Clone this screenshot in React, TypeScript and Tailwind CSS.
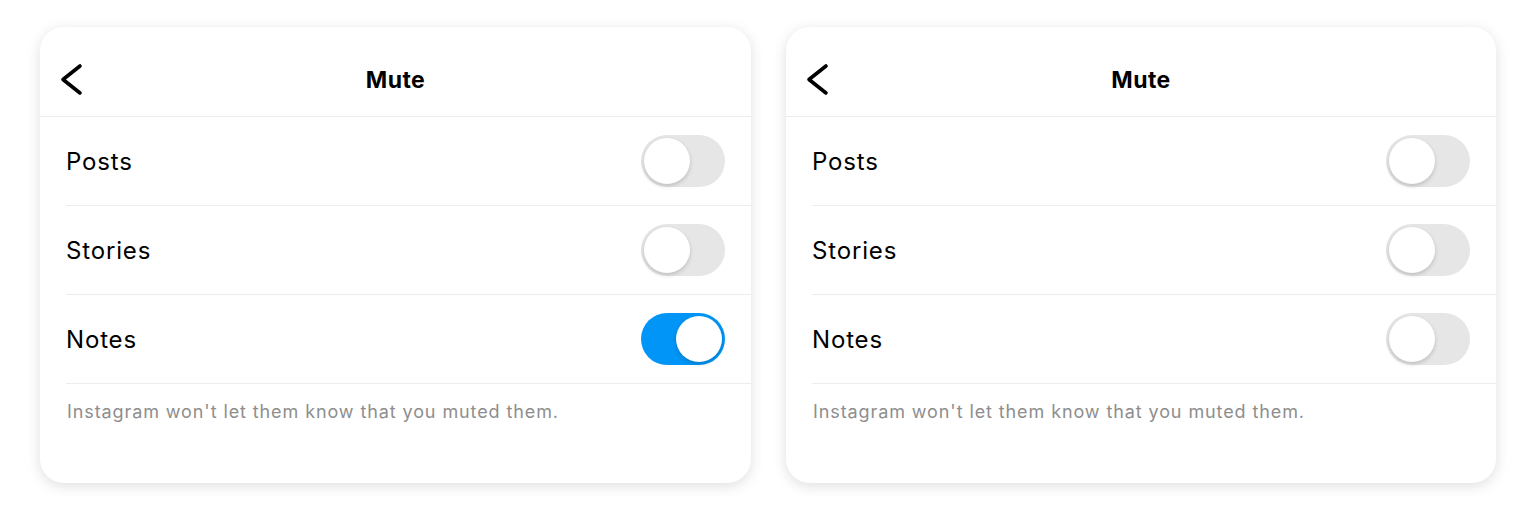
import React from 'react';

const font = { fontFamily: 'Inter, "Noto Sans", sans-serif' };

const Toggle: React.FC<{ on?: boolean }> = ({ on }) => (
  <div
    className={`w-[84px] h-[52px] rounded-full p-[3px] flex items-center ${
      on ? 'bg-[#0095f6] justify-end' : 'bg-[#e6e6e6] justify-start'
    }`}
  >
    <div className="w-[46px] h-[46px] rounded-full bg-white shadow-[0_2px_4px_rgba(0,0,0,0.18)]" />
  </div>
);

const Row: React.FC<{ label: string; on?: boolean }> = ({ label, on }) => (
  <div className="ml-[26px] h-[89px] border-b border-[#ececec] flex items-center justify-between pr-[26px]">
    <span className="text-[24px] tracking-[0.035em] text-black pt-[2px]">{label}</span>
    <Toggle on={on} />
  </div>
);

const MuteCard: React.FC<{ notesOn?: boolean; width: string }> = ({ notesOn, width }) => (
  <div className={`${width} h-[456px] bg-white rounded-[24px] shadow-[0_3px_14px_rgba(0,0,0,0.13)] overflow-hidden`}>
    <header className="h-[90px] border-b border-[#ececec] flex items-center relative">
      <button className="absolute left-[20px] top-[34px] p-0">
        <svg width="24" height="36" viewBox="0 0 24 36" fill="none">
          <path d="M20 5 L3 18.5 L20 32" stroke="#000" strokeWidth="3.6" strokeLinecap="round" strokeLinejoin="round" />
        </svg>
      </button>
      <span className="flex-1 text-center text-[23px] tracking-[0.02em] font-bold text-black pt-[17px]">Mute</span>
    </header>
    <Row label="Posts" />
    <Row label="Stories" />
    <Row label="Notes" on={notesOn} />
    <p className="ml-[27px] mt-[14px] text-[18px] tracking-[0.05em] text-[#8e8e8e]">
      Instagram won't let them know that you muted them.
    </p>
  </div>
);

export default function App() {
  return (
    <div className="w-[1536px] h-[509px] bg-white flex gap-[35px] pl-[40px] pt-[27px]" style={font}>
      <MuteCard notesOn width="w-[711px]" />
      <MuteCard width="w-[710px]" />
    </div>
  );
}
